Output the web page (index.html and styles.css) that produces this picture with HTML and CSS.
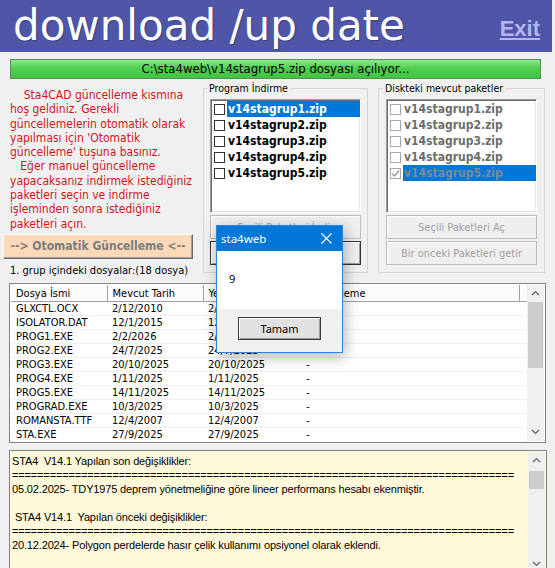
FILE: index.html
```html
<!DOCTYPE html>
<html lang="tr">
<head>
	<meta charset="UTF-8">
	<meta name="viewport" content="width=device-width, initial-scale=1.0">
	<title>download /up date</title>
	<link rel="stylesheet" href="styles.css">
</head>
<body>
<div class="window">

	<div class="header">
		<h1 class="title">download /up date</h1>
		<a class="exit" href="#">Exit</a>
	</div>

	<div class="status">C:\sta4web\v14stagrup5.zip dosyası açılıyor...</div>

	<div class="top">
		<div class="intro">
			<p class="welcome">&nbsp;&nbsp;&nbsp;&nbsp;Sta4CAD güncelleme kısmına<br>hoş geldiniz. Gerekli<br>güncellemelerin otomatik olarak<br>yapılması için 'Otomatik<br>güncelleme' tuşuna basınız.<br>&nbsp;&nbsp;&nbsp;Eğer manuel güncelleme<br>yapacaksanız indirmek istediğiniz<br>paketleri seçin ve indirme<br>işleminden sonra istediğiniz<br>paketleri açın.</p>
			<button class="auto">--&gt; Otomatik Güncelleme &lt;--</button>
			<div class="count">1. grup içindeki dosyalar:(18 dosya)</div>
		</div>

		<fieldset class="group">
			<legend>Program İndirme</legend>
			<ul class="list">
				<li class="sel"><span class="box"></span><span class="name">v14stagrup1.zip</span></li>
				<li><span class="box"></span><span class="name">v14stagrup2.zip</span></li>
				<li><span class="box"></span><span class="name">v14stagrup3.zip</span></li>
				<li><span class="box"></span><span class="name">v14stagrup4.zip</span></li>
				<li><span class="box"></span><span class="name">v14stagrup5.zip</span></li>
			</ul>
			<button class="btn" disabled>Seçili Paketleri İndir</button>
			<button class="btn default">İptal</button>
		</fieldset>

		<fieldset class="group disk">
			<legend>Diskteki mevcut paketler</legend>
			<ul class="list off">
				<li><span class="box"></span><span class="name">v14stagrup1.zip</span></li>
				<li><span class="box"></span><span class="name">v14stagrup2.zip</span></li>
				<li><span class="box"></span><span class="name">v14stagrup3.zip</span></li>
				<li><span class="box"></span><span class="name">v14stagrup4.zip</span></li>
				<li class="sel"><span class="box"><svg width="9" height="9" viewBox="0 0 9 9"><polyline points="1,4.5 3.5,7 8,1.5" fill="none" stroke="#9a9a9a" stroke-width="1.3"/></svg></span><span class="name">v14stagrup5.zip</span></li>
			</ul>
			<button class="btn" disabled>Seçili Paketleri Aç</button>
			<button class="btn" disabled>Bir onceki Paketleri getir</button>
		</fieldset>
	</div>

	<div class="files">
		<div class="grid">
			<table>
				<colgroup><col style="width:96px"><col style="width:96px"><col style="width:98px"><col style="width:218px"><col></colgroup>
				<thead>
					<tr><th>Dosya İsmi</th><th>Mevcut Tarih</th><th>Yeni Tarih</th><th>Güncelleme</th><th></th></tr>
				</thead>
				<tbody>
					<tr><td>GLXCTL.OCX</td><td>2/12/2010</td><td>2/12/2010</td><td>-</td><td></td></tr>
					<tr><td>ISOLATOR.DAT</td><td>12/1/2015</td><td>12/1/2015</td><td>-</td><td></td></tr>
					<tr><td>PROG1.EXE</td><td>2/2/2026</td><td>2/2/2026</td><td>-</td><td></td></tr>
					<tr><td>PROG2.EXE</td><td>24/7/2025</td><td>24/7/2025</td><td>-</td><td></td></tr>
					<tr><td>PROG3.EXE</td><td>20/10/2025</td><td>20/10/2025</td><td>-</td><td></td></tr>
					<tr><td>PROG4.EXE</td><td>1/11/2025</td><td>1/11/2025</td><td>-</td><td></td></tr>
					<tr><td>PROG5.EXE</td><td>14/11/2025</td><td>14/11/2025</td><td>-</td><td></td></tr>
					<tr><td>PROGRAD.EXE</td><td>10/3/2025</td><td>10/3/2025</td><td>-</td><td></td></tr>
					<tr><td>ROMANSTA.TTF</td><td>12/4/2007</td><td>12/4/2007</td><td>-</td><td></td></tr>
					<tr><td>STA.EXE</td><td>27/9/2025</td><td>27/9/2025</td><td>-</td><td></td></tr>
				</tbody>
			</table>
		</div>
		<div class="scroll">
			<span class="arrow"><svg width="9" height="6" viewBox="0 0 9 6"><polyline points="1,5 4.5,1.5 8,5" fill="none" stroke="#606060" stroke-width="1.2"/></svg></span>
			<span class="thumb table-thumb"></span>
			<span class="track"></span>
			<span class="arrow"><svg width="9" height="6" viewBox="0 0 9 6"><polyline points="1,1 4.5,4.5 8,1" fill="none" stroke="#606060" stroke-width="1.2"/></svg></span>
		</div>
	</div>

	<div class="memo">
		<pre class="log">STA4  V14.1 Yapılan son değişiklikler:
================================================================================
05.02.2025- TDY1975 deprem yönetmeliğine göre lineer performans hesabı ekenmiştir.

 STA4 V14.1  Yapılan önceki değişiklikler:
================================================================================
20.12.2024- Polygon perdelerde hasır çelik kullanımı opsiyonel olarak eklendi.
</pre>
		<div class="scroll">
			<span class="arrow"><svg width="9" height="6" viewBox="0 0 9 6"><polyline points="1,5 4.5,1.5 8,5" fill="none" stroke="#606060" stroke-width="1.2"/></svg></span>
			<span class="thumb memo-thumb"></span>
			<span class="track"></span>
			<span class="arrow"><svg width="9" height="6" viewBox="0 0 9 6"><polyline points="1,1 4.5,4.5 8,1" fill="none" stroke="#606060" stroke-width="1.2"/></svg></span>
		</div>
	</div>

	<!-- message box -->
	<div class="dialog">
		<div class="dialog-title">
			<span>sta4web</span>
			<svg width="11" height="11" viewBox="0 0 11 11"><path d="M0.5 0.5 L10.5 10.5 M10.5 0.5 L0.5 10.5" stroke="#fff" stroke-width="1.1"/></svg>
		</div>
		<div class="dialog-body">9</div>
		<div class="dialog-foot"><button class="ok">Tamam</button></div>
	</div>

</div>
</body>
</html>
```

FILE: styles.css
```css
* {box-sizing: border-box;}
body {margin: 0;background: #f0f0f0;font-family: "DejaVu Sans Condensed", "DejaVu Sans", sans-serif;font-stretch: condensed;font-size: 11px;color: #000;}
.window {position: relative;width: 555px;height: 568px;overflow: hidden;}

/* header */
.header {display: flex;justify-content: space-between;align-items: flex-start;width: 552px;height: 52px;padding: 0 12px 0 13px;background: #4f55a7;}
.title {margin: 0;font: normal 42px/52px "DejaVu Sans", sans-serif;font-stretch: normal;color: #fff;text-shadow: 1px 1px 1px rgba(0,0,0,.25);}
.exit {margin-top: 18px;font: bold 22px/1 "Liberation Sans", sans-serif;font-stretch: normal;color: #b4b4f2;text-decoration: underline;}

.status {width: 531px;height: 20px;margin: 7px 0 0 10px;border: 1px solid #5b8c5b;background: linear-gradient(#8ee88e, #4fce4f 45%, #42c442);font-size: 13px;line-height: 18px;text-align: center;}

/* upper part: text, two group boxes */
.top {display: flex;align-items: flex-start;margin-top: 3px;padding-left: 3px;}
.intro {width: 195px;padding-top: 6px;}
.welcome {margin: 0 0 0 7px;font-size: 12px;line-height: 14.3px;color: #d3141c;white-space: nowrap;}
.auto {display: block;width: 190px;height: 25px;margin-top: 3px;padding: 0;border: 1px solid;border-color: #fff #696969 #696969 #fff;box-shadow: inset -1px -1px #a0a0a0;background: #fbd9b9;font-family: inherit;font-stretch: condensed;font-size: 12px;font-weight: bold;color: #7d7d7d;}
.count {margin-top: 5px;padding-left: 7px;line-height: 14px;white-space: nowrap;}

.group {width: 165px;margin: 0 0 0 5px;padding: 5px 6px 7px;border: 1px solid #d5d5d5;}
.group.disk {width: 167px;margin-left: 10px;padding: 5px 7px 7px;}
.group legend {margin-left: -3px;padding: 0 2px;font-size: 10.5px;line-height: 12px;}

.list {height: 114px;margin: 0;padding: 1px 0 0 1px;list-style: none;background: #fff;border: 1px solid;border-color: #a0a0a0 #fff #fff #a0a0a0;box-shadow: inset 1px 1px #696969, inset -1px -1px #e3e3e3;}
.list li {display: flex;align-items: center;height: 16px;}
.list .box {display: flex;align-items: center;justify-content: center;width: 11px;height: 11px;margin: 0 2px 0 2px;border: 1px solid #333;background: #fff;}
.list .name {flex: 1;padding-left: 1px;font-size: 12px;font-weight: bold;line-height: 16px;}
.list li.sel .name {background: #0078d7;color: #fff;}
.list.off .box {border-color: #a8a8a8;}
.list.off .name {color: #6d6d6d;}
.list.off li.sel .name {color: #7d8a99;}

.btn {display: block;width: 100%;height: 24px;margin-top: 2px;padding: 0;border: 1px solid #bcbcbc;background: #efefef;box-shadow: inset 1px 1px #fff;font-family: inherit;font-stretch: condensed;font-size: 11px;color: #a0a0a0;}
.btn.default {border: 1px solid #333;box-shadow: inset 1px 1px #fff, inset -1px -1px #a0a0a0;background: #f0f0f0;color: #000;}

/* file list */
.files {display: flex;height: 160px;margin: 5px 9px 0;padding: 1px;border: 1px solid #828282;background: #fff;}
.grid {flex: 1;overflow: hidden;}
.grid table {width: 100%;border-collapse: collapse;table-layout: fixed;}
.grid th {height: 17px;padding: 0 0 0 5px;border-right: 1px solid #a0a0a0;border-bottom: 1px solid #a0a0a0;background: #fbfbfb;font-weight: normal;text-align: left;white-space: nowrap;overflow: hidden;}
.grid th:last-child {border-right: 0;}
.grid td {height: 14px;padding: 0 0 0 5px;border-bottom: 1px solid #f0f0f0;line-height: 13px;white-space: nowrap;overflow: hidden;}

.scroll {display: flex;flex-direction: column;width: 17px;background: #f0f0f0;}
.scroll .arrow {display: flex;align-items: center;justify-content: center;height: 17px;}
.scroll .thumb {margin: 0 1px;background: #cdcdcd;}
.scroll .track {flex: 1;}
.table-thumb {height: 66px;}
.memo-thumb {height: 18px;margin-top: 2px !important;}

/* change log */
.memo {display: flex;height: 125px;margin: 7px 8px 0 9px;padding: 1px;border: 1px solid #828282;background: #fff9dc;}
.log {flex: 1;margin: 0;padding: 2px 0 0 1px;font: 11px/14px "Liberation Sans", sans-serif;letter-spacing: -0.15px;overflow: hidden;}

/* message box */
.dialog {position: absolute;left: 216px;top: 225px;width: 127px;height: 128px;display: flex;flex-direction: column;border: 1px solid #2a86d8;background: #fff;box-shadow: 2px 4px 14px rgba(0,0,0,.3);}
.dialog-title {display: flex;justify-content: space-between;align-items: center;height: 25px;padding: 0 10px 0 4px;background: #0078d7;color: #fff;font: 11.5px "Noto Sans", sans-serif;}
.dialog-body {flex: 1;padding: 21px 0 0 12px;font: 11px/14px "Noto Sans", sans-serif;}
.dialog-foot {display: flex;justify-content: center;height: 43px;padding-top: 8px;background: #f0f0f0;}
.ok {width: 83px;height: 23px;padding: 0;border: 1px solid #3a3a3a;box-shadow: inset 1px 1px #fff, inset -1px -1px #9a9a9a;background: #e1e1e1;font: 11px "Noto Sans", sans-serif;}
```
